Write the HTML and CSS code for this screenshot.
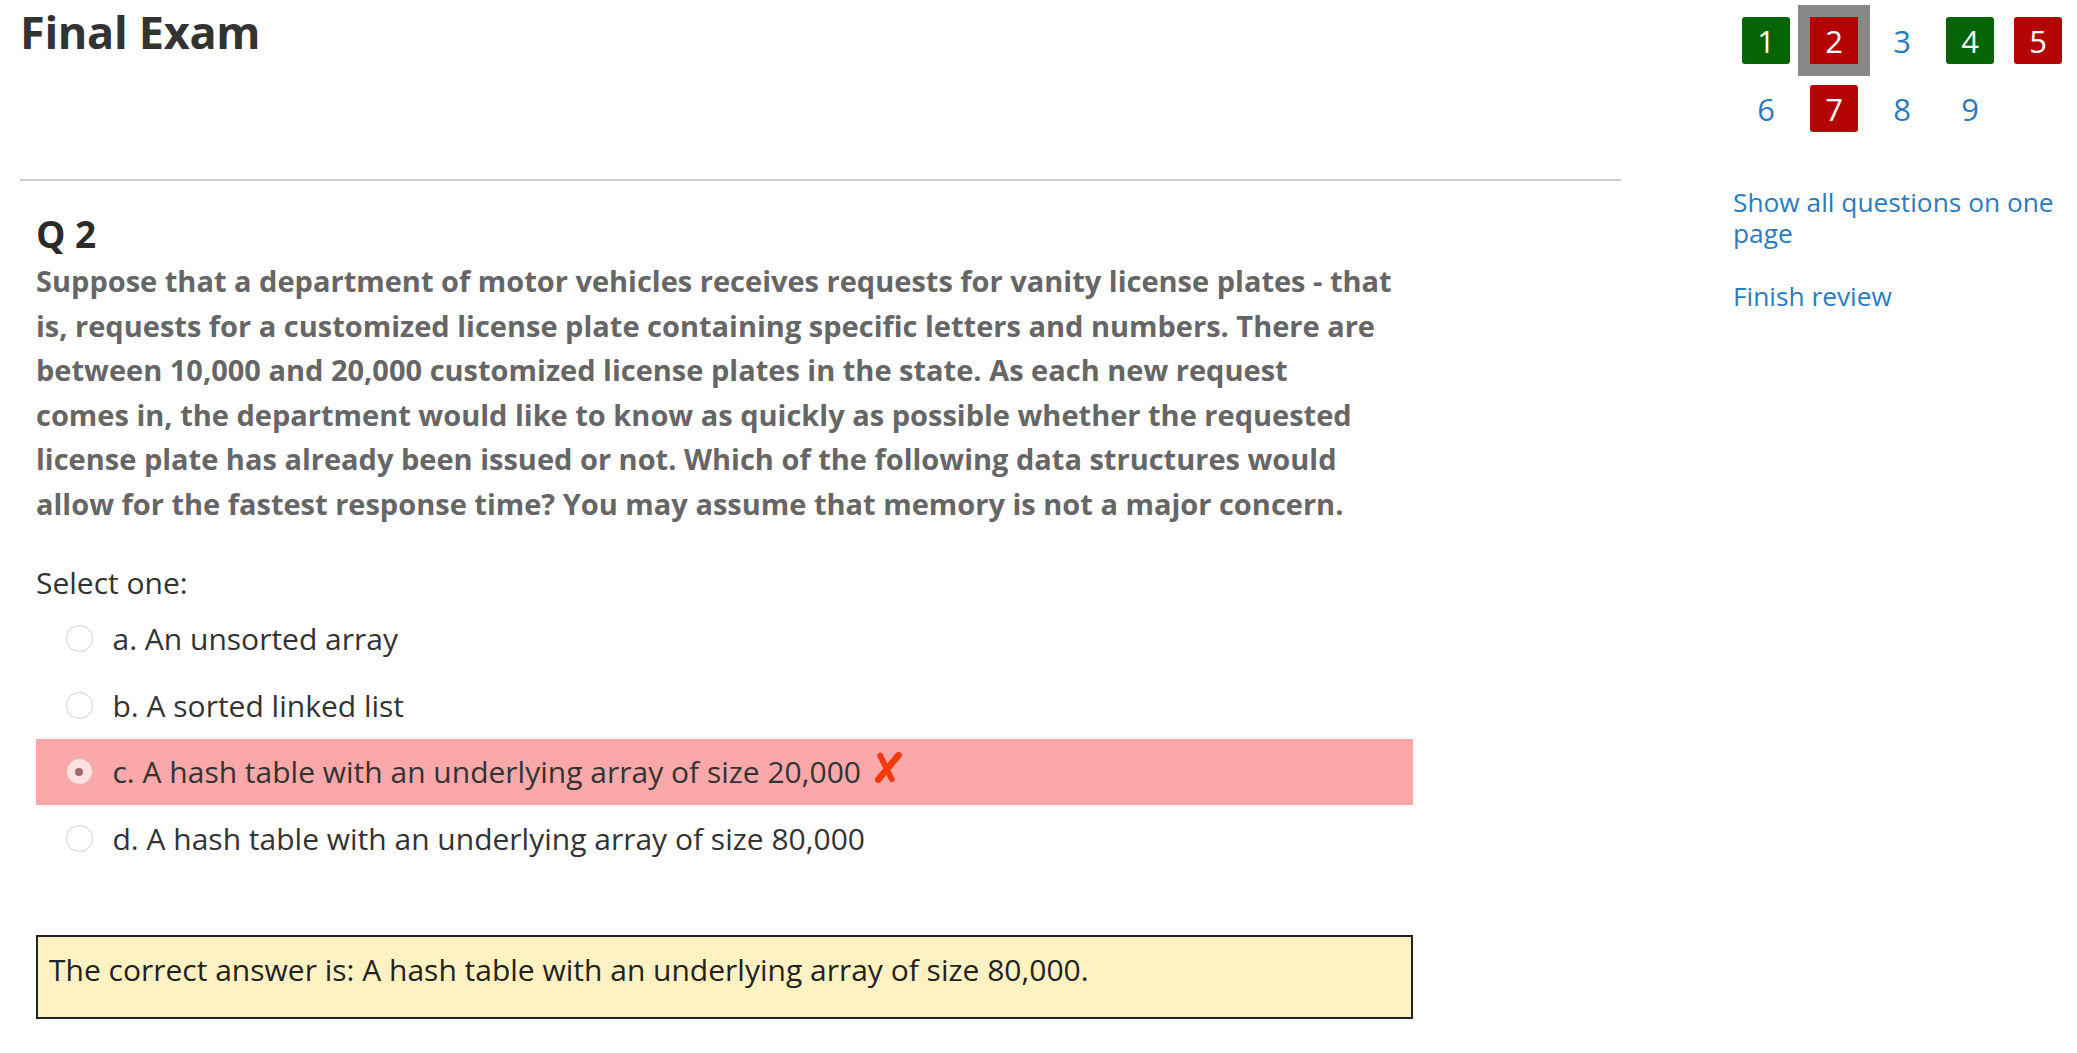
FILE: index.html
```html
<!DOCTYPE html>
<html lang="en">
<head>
<meta charset="utf-8">
<title>Final Exam</title>
<link rel="stylesheet" href="styles.css">
</head>
<body>
<div class="page">
  <main class="main">
    <header class="page-header">
      <h1 class="page-title">Final Exam</h1>
    </header>
    <hr class="divider">
    <section class="question">
      <h2 class="qno">Q 2</h2>
      <div class="qtext">Suppose that a department of motor vehicles receives requests for vanity license plates - that<br>is, requests for a customized license plate containing specific letters and numbers. There are<br>between 10,000 and 20,000 customized license plates in the state. As each new request<br>comes in, the department would like to know as quickly as possible whether the requested<br>license plate has already been issued or not. Which of the following data structures would<br>allow for the fastest response time? You may assume that memory is not a major concern.</div>
      <div class="prompt">Select one:</div>
      <div class="options">
        <div class="option"><span class="radio"></span><span class="label">a. An unsorted array</span></div>
        <div class="option"><span class="radio"></span><span class="label">b. A sorted linked list</span></div>
        <div class="option incorrect"><span class="radio checked"></span><span class="label">c. A hash table with an underlying array of size 20,000</span>
          <svg class="xmark" width="28" height="31" viewBox="0 0 28 31" aria-hidden="true">
            <path d="M24.6 3.2 L4.2 27.6" stroke="#f53a10" stroke-width="6.6" stroke-linecap="round" fill="none"/>
            <path d="M6.2 3.6 L17.8 27.2" stroke="#f53a10" stroke-width="5.8" stroke-linecap="round" fill="none"/>
          </svg>
        </div>
        <div class="option"><span class="radio"></span><span class="label">d. A hash table with an underlying array of size 80,000</span></div>
      </div>
      <div class="outcome">The correct answer is: A hash table with an underlying array of size 80,000.</div>
    </section>
  </main>
  <aside class="sidebar">
    <nav class="qnav">
      <a class="qbtn correct">1</a>
      <a class="qbtn incorrect current">2</a>
      <a class="qbtn">3</a>
      <a class="qbtn correct">4</a>
      <a class="qbtn incorrect">5</a>
      <a class="qbtn">6</a>
      <a class="qbtn incorrect">7</a>
      <a class="qbtn">8</a>
      <a class="qbtn">9</a>
    </nav>
    <a class="side-link side-link-first">Show all questions on one page</a>
    <a class="side-link">Finish review</a>
  </aside>
</div>
</body>
</html>
```

FILE: styles.css
```css
* { box-sizing: border-box; }

html, body {
  margin: 0;
  padding: 0;
  background: #ffffff;
}

body {
  font-family: "Open Sans", "Lato", "Liberation Sans", sans-serif;
  color: #333333;
}

.page {
  display: flex;
  align-items: flex-start;
}

.main {
  width: 1601px;
  margin-left: 20px;
  flex: none;
}

.page-header {
  height: 170px;
  padding-top: 9px;
  padding-left: 0;
}

.page-title {
  margin: 0;
  font-size: 45px;
  line-height: 46px;
  font-weight: 700;
  color: #333333;
  letter-spacing: -0.3px;
}

.divider {
  margin: 0;
  border: 0;
  height: 2px;
  background: #cccccc;
  margin-top: 9px;
}

.question {
  width: 1393px;
  padding-left: 16px;
  padding-top: 32px;
}

.qno {
  margin: 0;
  font-size: 37px;
  line-height: 42px;
  font-weight: 700;
  color: #2b2b2b;
  letter-spacing: 0.5px;
  word-spacing: -1px;
}

.qtext {
  margin-top: 4px;
  font-size: 29px;
  line-height: 44.6px;
  font-weight: 700;
  color: #666666;
  white-space: nowrap;
}

.prompt {
  margin-top: 36px;
  font-size: 30px;
  line-height: 40px;
  color: #333333;
}

.options {
  margin-top: 3px;
}

.option {
  display: flex;
  align-items: center;
  height: 66.5px;
  padding-left: 29.5px;
  font-size: 30px;
  color: #333333;
}

.option.incorrect {
  background: #fba8aa;
}

.radio {
  width: 27px;
  height: 27px;
  border-radius: 50%;
  border: 1px solid #cfcfcf;
  background: #ffffff;
  margin-right: 20px;
  flex: none;
  position: relative;
}

.radio.checked {
  background: #fde0e0;
  border-color: #e3b5b5;
}

.radio.checked::after {
  content: "";
  position: absolute;
  left: 50%;
  top: 50%;
  width: 8px;
  height: 8px;
  margin: -4px 0 0 -4px;
  border-radius: 50%;
  background: #a06a6a;
}

.xmark {
  margin-left: 13px;
  margin-top: -8px;
  flex: none;
}

.outcome {
  margin-top: 63.5px;
  border: 2px solid #222222;
  background: #fff2c2;
  font-size: 30px;
  line-height: 40px;
  padding: 13px 11px 27px;
  color: #222222;
}

.sidebar {
  margin-left: 112px;
  width: 338px;
  flex: none;
}

.qnav {
  display: grid;
  grid-template-columns: repeat(5, 48px);
  grid-auto-rows: 47px;
  column-gap: 20px;
  row-gap: 21px;
  margin-top: 17px;
  margin-left: 9px;
}

.qbtn {
  display: flex;
  align-items: center;
  justify-content: center;
  font-size: 31px;
  color: #2a7bbf;
  border-radius: 3px;
}

.qbtn.correct {
  background: #056405;
  color: #ffffff;
}

.qbtn.incorrect {
  background: #b40303;
  color: #ffffff;
}

.qbtn.current {
  border-radius: 0;
  box-shadow: 0 0 0 12px #888888;
}

.side-link {
  display: block;
  font-size: 26.3px;
  line-height: 31px;
  color: #2a7bbf;
  margin-top: 32px;
}

.side-link-first {
  margin-top: 55px;
}
```
